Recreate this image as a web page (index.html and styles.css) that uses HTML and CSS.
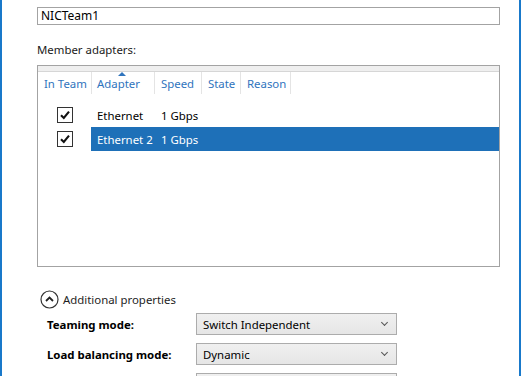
FILE: index.html
```html
<!DOCTYPE html>
<html>
<head>
    <link rel="stylesheet" href="styles.css">
</head>
<body>
    <div class="window">
        <div class="name_box">NICTeam1</div>

        <div class="section_label">Member adapters:</div>

        <div class="adapter_list">
            <div class="list_band"></div>
            <div class="list_header">
                <div class="col col_team">In Team</div>
                <div class="col col_adapter sorted">Adapter</div>
                <div class="col col_speed">Speed</div>
                <div class="col col_state">State</div>
                <div class="col col_reason">Reason</div>
            </div>

            <div class="list_row">
                <div class="col_check">
                    <span class="checkbox">
                        <svg width="14" height="14" viewBox="0 0 14 14"><path d="M3 7.2 L5.8 10 L11 3.6" fill="none" stroke="#111" stroke-width="2.1"/></svg>
                    </span>
                </div>
                <div class="row_main">
                    <div class="cell cell_adapter">Ethernet</div>
                    <div class="cell cell_speed">1 Gbps</div>
                </div>
            </div>
            <div class="list_row">
                <div class="col_check">
                    <span class="checkbox">
                        <svg width="14" height="14" viewBox="0 0 14 14"><path d="M3 7.2 L5.8 10 L11 3.6" fill="none" stroke="#111" stroke-width="2.1"/></svg>
                    </span>
                </div>
                <div class="row_main selected">
                    <div class="cell cell_adapter">Ethernet 2</div>
                    <div class="cell cell_speed">1 Gbps</div>
                </div>
            </div>
        </div>

        <div class="more_toggle">
            <svg width="19" height="19" viewBox="0 0 19 19">
                <circle cx="9.5" cy="9.5" r="8.5" fill="none" stroke="#333" stroke-width="1.2"/>
                <path d="M6 11 L9.5 7.5 L13 11" fill="none" stroke="#222" stroke-width="1.8"/>
            </svg>
            <span>Additional properties</span>
        </div>

        <div class="props">
            <div class="prop_label">Teaming mode:</div>
            <div class="combo"><span>Switch Independent</span><span class="chev"></span></div>
            <div class="prop_label">Load balancing mode:</div>
            <div class="combo"><span>Dynamic</span><span class="chev"></span></div>
            <div class="prop_label"></div>
            <div class="combo"></div>
        </div>
    </div>
</body>
</html>
```

FILE: styles.css
```css
/* Base */
body {
    margin: 0;
    padding: 0;
    background-color: #fff;
    font-family: "Noto Sans", "Open Sans", sans-serif;
    font-size: 11.4px;
    color: #1a1a1a;
}

/* Dialog frame with accent edges */
.window {
    box-sizing: border-box;
    width: 521px;
    height: 376px;
    overflow: hidden;
    border-left: 2px solid #1979ca;
    border-right: 2px solid #1979ca;
    padding: 7px 0 0 35px;
}

/* Team name text box */
.name_box {
    box-sizing: border-box;
    width: 463px;
    height: 18px;
    border: 1px solid #a3a3a3;
    padding-left: 3px;
    line-height: 16px;
    font-size: 12px;
    color: #000;
}

.section_label {
    margin-top: 17px;
    line-height: 16px;
}

/* Member adapter list */
.adapter_list {
    box-sizing: border-box;
    width: 463px;
    height: 202px;
    margin-top: 7px;
    border: 1px solid #a3a3a3;
}

.list_band {
    height: 5px;
    background-color: #efefef;
    border-bottom: 1px solid #d6d6d6;
}

.list_header {
    display: flex;
    height: 22px;
    margin-bottom: 9px;
}

.list_header .col {
    box-sizing: border-box;
    border-right: 1px solid #e4e4e4;
    padding-left: 6px;
    line-height: 23px;
    color: #2f74bd;
    white-space: nowrap;
}

.col_team { width: 54px; }
.col_adapter { width: 63px; position: relative; }
.col_speed { width: 47px; }
.col_state { width: 39px; }
.col_reason { width: 50px; }

.list_header .col_adapter { padding-left: 5px; }

.sorted::before {
    content: "";
    position: absolute;
    left: 26px;
    top: 0;
    border-left: 4px solid transparent;
    border-right: 4px solid transparent;
    border-bottom: 4px solid #2f74bd;
}

.list_row {
    display: flex;
    height: 24px;
}

.col_check {
    width: 53px;
    display: flex;
    align-items: center;
    justify-content: center;
}

.checkbox {
    box-sizing: border-box;
    width: 16px;
    height: 16px;
    border: 1px solid #333;
    display: flex;
    align-items: center;
    justify-content: center;
    background-color: #fff;
}

.row_main {
    flex: 1;
    display: flex;
    align-items: center;
    color: #000;
}

.row_main.selected {
    background-color: #1e70b8;
    color: #fff;
}

.cell {
    white-space: nowrap;
}

.cell_adapter {
    width: 64px;
    padding-left: 6px;
    box-sizing: border-box;
}

.cell_speed {
    padding-left: 6px;
}

/* Expander */
.more_toggle {
    display: flex;
    align-items: center;
    gap: 4px;
    height: 20px;
    margin-top: 22px;
    margin-left: 3px;
    color: #1e1e1e;
}

/* Property rows */
.props {
    display: grid;
    grid-template-columns: 149px 201px;
    row-gap: 8px;
    margin-top: 4px;
    padding-left: 10px;
    align-items: center;
}

.prop_label {
    font-weight: bold;
    color: #000;
}

.combo {
    box-sizing: border-box;
    height: 22px;
    border: 1px solid #acacac;
    background: linear-gradient(#f0f0f0, #e6e6e6);
    display: flex;
    align-items: center;
    justify-content: space-between;
    padding: 0 9px 0 6px;
    color: #000;
}

.chev {
    width: 4px;
    height: 4px;
    border-right: 1px solid #555;
    border-bottom: 1px solid #555;
    transform: rotate(45deg);
    margin-top: -3px;
}
```
